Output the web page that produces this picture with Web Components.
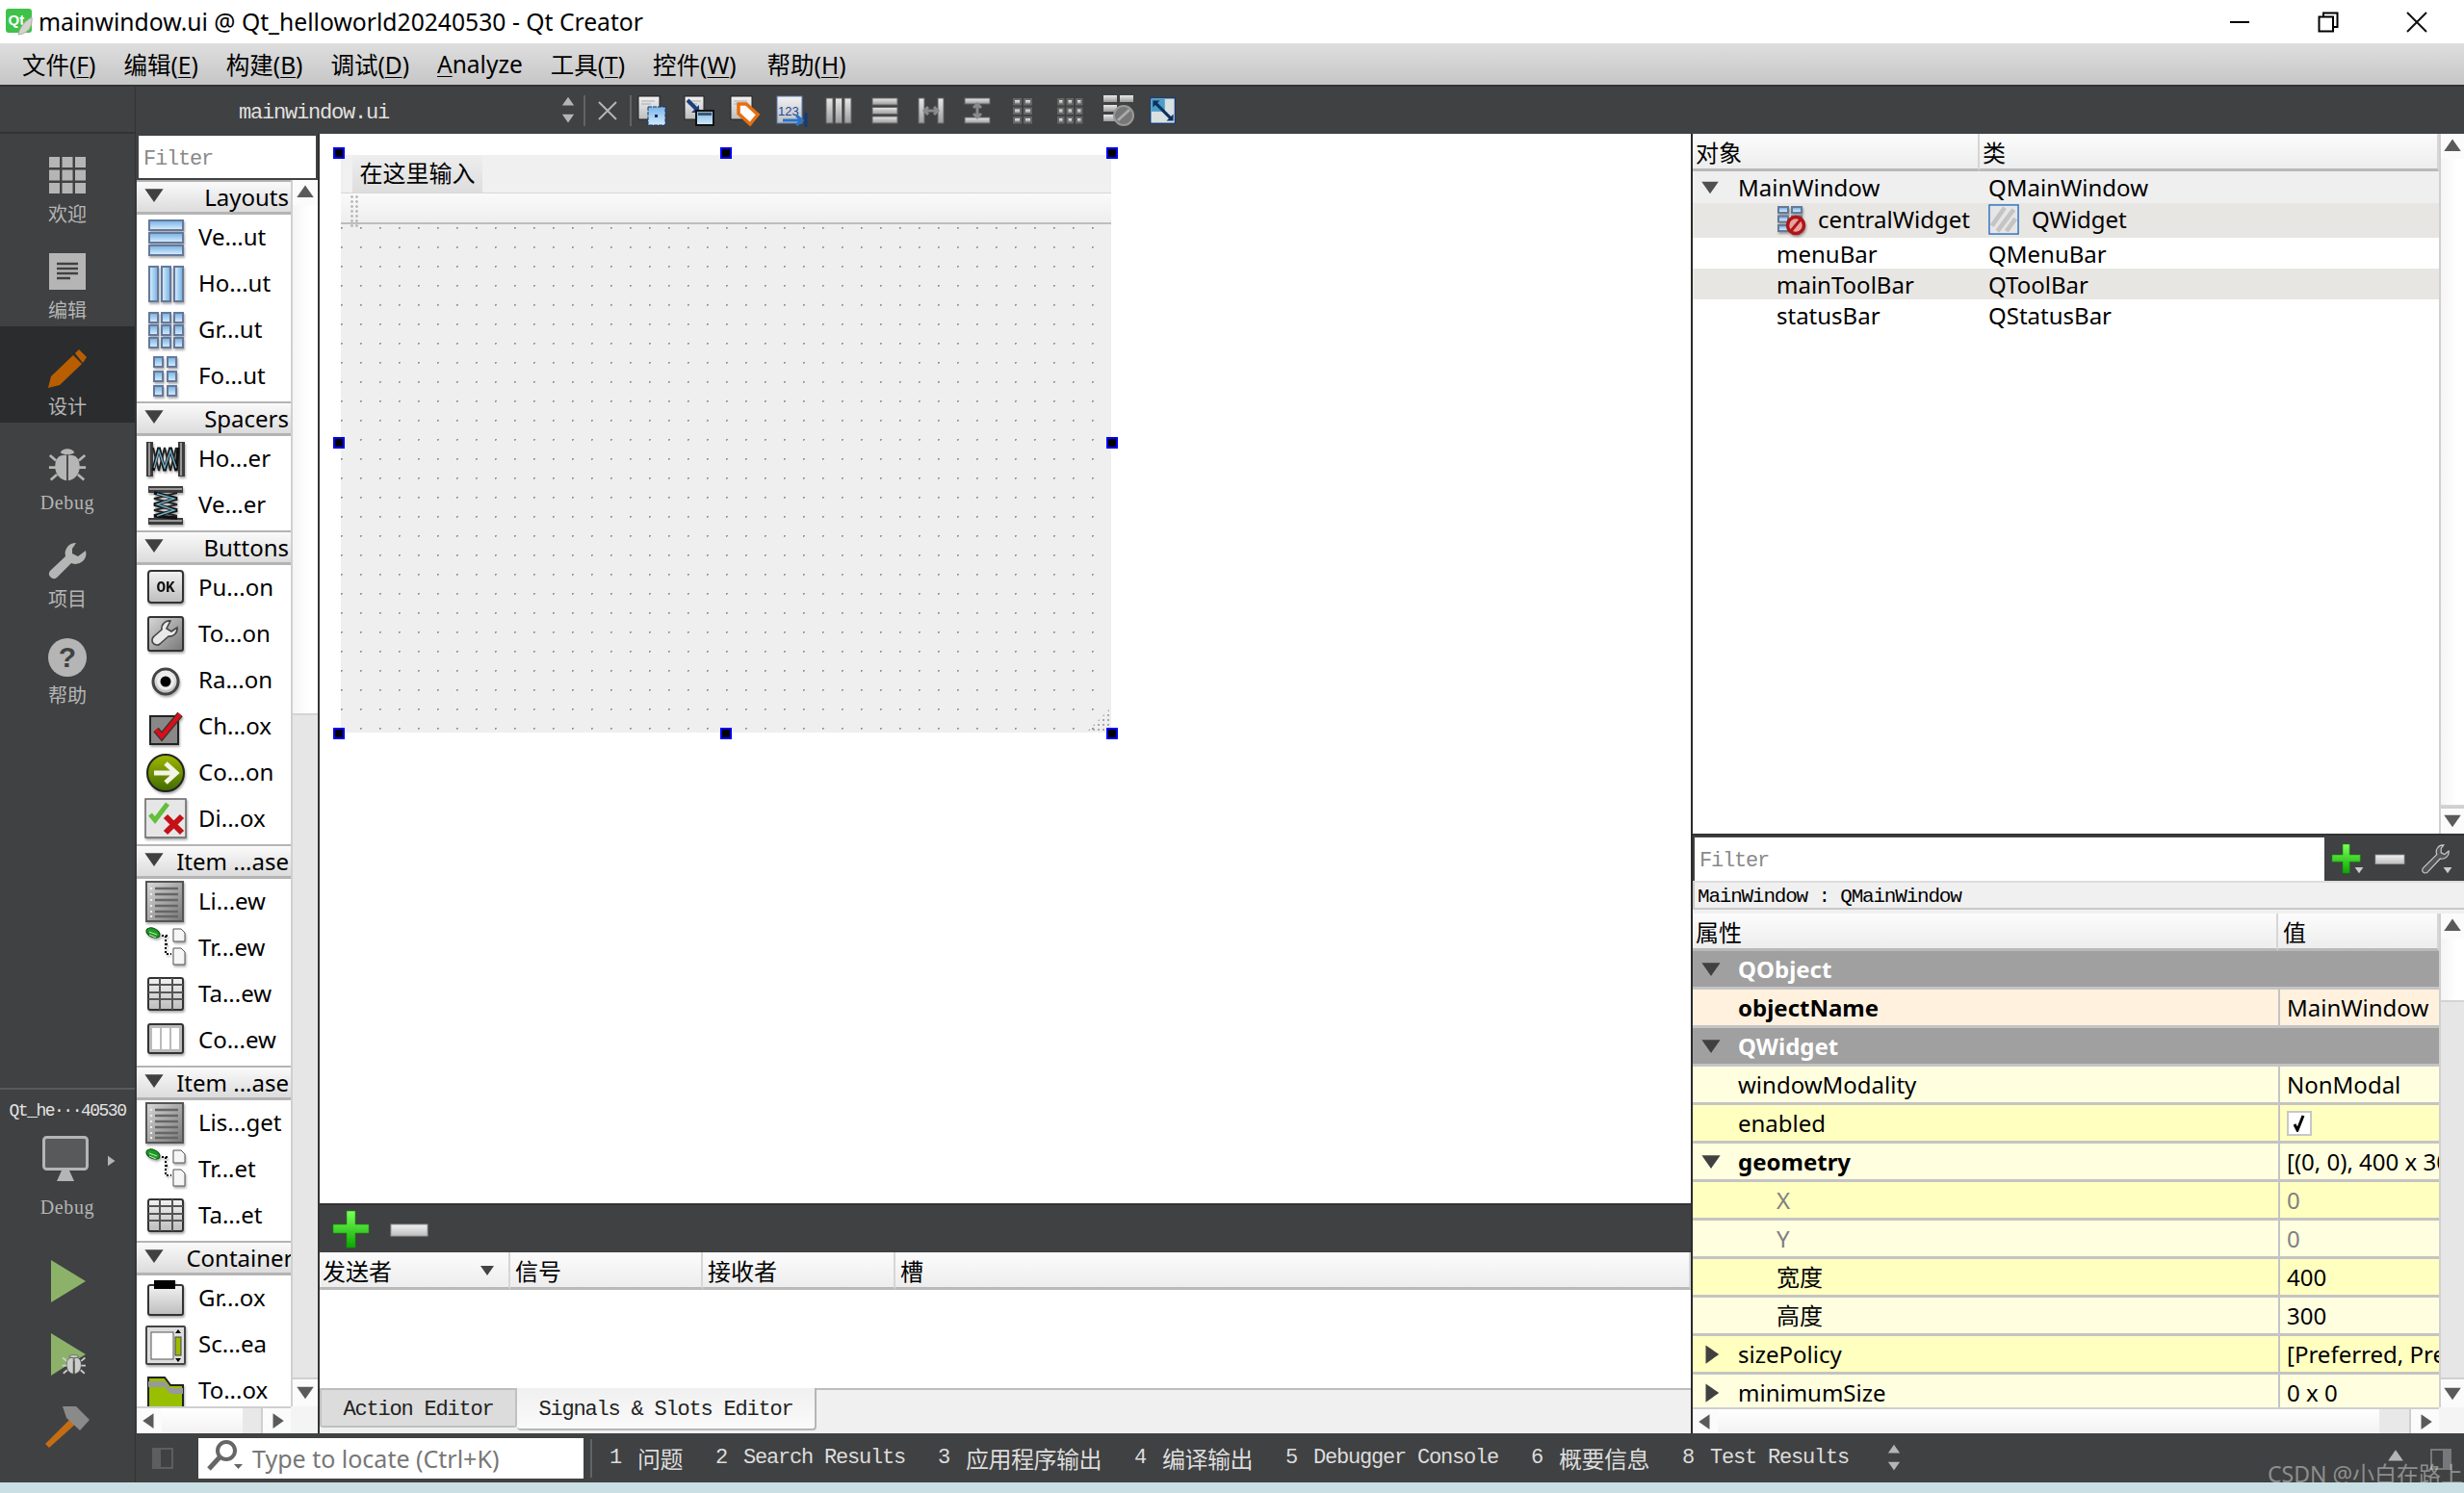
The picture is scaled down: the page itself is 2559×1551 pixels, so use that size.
<!DOCTYPE html>
<html lang="zh"><head><meta charset="utf-8"><title>Qt Creator</title>
<style>html,body{margin:0;padding:0;width:2559px;height:1551px;overflow:hidden;background:#c9dfe4}</style></head>
<body><qt-creator></qt-creator>
<script>
const SANS='"Noto Sans","Noto Sans CJK SC",sans-serif';
const CJK='"Noto Sans CJK SC",sans-serif';
const MONO='font:22px "Liberation Mono","Noto Sans CJK SC",monospace;letter-spacing:-1.2px;';
const DARK='#404142';
function def(tag,css,html){customElements.define(tag,class extends HTMLElement{
  connectedCallback(){ if(this.shadowRoot) return;
    const a=n=>this.getAttribute(n);
    this.attachShadow({mode:'open'}).innerHTML='<style>'+css+'</style>'+(typeof html==='function'?html(a):html);
  }});}
/* ---------- icons ---------- */
const GR=`<defs>
<linearGradient id="b" x1="0" y1="0" x2="0" y2="1"><stop offset="0" stop-color="#7db6e6"/><stop offset="1" stop-color="#d2eafc"/></linearGradient>
<linearGradient id="bh" x1="0" y1="0" x2="1" y2="0"><stop offset="0" stop-color="#d2eafc"/><stop offset="1" stop-color="#7db6e6"/></linearGradient>
<linearGradient id="g" x1="0" y1="0" x2="0" y2="1"><stop offset="0" stop-color="#f2f2f2"/><stop offset="1" stop-color="#bdbdbd"/></linearGradient>
<linearGradient id="gd" x1="0" y1="0" x2="1" y2="1"><stop offset="0" stop-color="#d8d8d8"/><stop offset="1" stop-color="#777"/></linearGradient>
<linearGradient id="gv" x1="0" y1="0" x2="0" y2="1"><stop offset="0" stop-color="#9fb800"/><stop offset="1" stop-color="#3f6a00"/></linearGradient>
<linearGradient id="plus" x1="0" y1="0" x2="0" y2="1"><stop offset="0" stop-color="#7dff5c"/><stop offset="1" stop-color="#0aa800"/></linearGradient>
<linearGradient id="tb" x1="0" y1="0" x2="0" y2="1"><stop offset="0" stop-color="#e8e8e8"/><stop offset="1" stop-color="#9c9c9c"/></linearGradient>
</defs>`;
const cell=(x,y,w,h,f='url(#b)',s='#66789a')=>`<rect x="${x}" y="${y}" width="${w}" height="${h}" fill="${s}"/><rect x="${x+2}" y="${y+2}" width="${w-4}" height="${h-4}" fill="${f}"/>`;
const gridOf=(x0,y0,cols,rows,w,h,px,py,f,s)=>{let o='';for(let r=0;r<rows;r++)for(let c=0;c<cols;c++)o+=cell(x0+c*px,y0+r*py,w,h,f,s);return o;};
const spring=`<rect x="2" y="4" width="7" height="36" fill="#3c3c3c"/><rect x="35" y="4" width="7" height="36" fill="#3c3c3c"/>
<rect x="4" y="5" width="2" height="34" fill="#999"/><rect x="37" y="5" width="2" height="34" fill="#999"/>
<path d="M9 34L15 10 21 34 27 10 33 34 35 10" fill="none" stroke="#111" stroke-width="3.4"/><path d="M9 10L15 34 21 10 27 34 33 10" fill="none" stroke="#222" stroke-width="2"/><path d="M10 31L15 13 21 31 27 13 33 31" fill="none" stroke="#6fb0cc" stroke-width="1.4"/>`;
const gw=(x=2,y=2,w=22,h=24)=>`<rect x="${x}" y="${y}" width="${w}" height="${h}" fill="url(#g)" stroke="#222"/><path d="M${x+3} ${y+5}h14M${x+3} ${y+8}h10" stroke="#aaa"/>`;
const I={
 vlayout:[44,gridOf(4,3,1,3,37,12,0,13)+''],
 hlayout:[44,gridOf(4,3,3,1,11,38,13,0,'url(#bh)')],
 grid:[44,gridOf(4,3,3,3,11,12,13,13)],
 form:[44,gridOf(9,1,2,3,11,12,14,15)],
 hspacer:[44,spring],
 vspacer:[44,`<g transform="rotate(90 22 22)">${spring}</g>`],
 push:[44,`<rect x="4" y="4" width="36" height="33" rx="3" fill="url(#g)" stroke="#333" stroke-width="2"/><text x="22" y="26" font-family="Liberation Mono" font-weight="700" font-size="16" text-anchor="middle" fill="#111">OK</text>`],
 tool:[44,`<rect x="4" y="4" width="36" height="35" rx="2" fill="url(#gd)" stroke="#333" stroke-width="2"/><path d="M27 8a8 8 0 0 0-9 9l-8 7a5 5 0 0 0 6 8l9-8a8 8 0 0 0 9-9l-6 4-5-3z" fill="#e9e9e9" stroke="#444" stroke-width="1.6"/>`],
 radio:[44,`<circle cx="22" cy="23" r="13" fill="url(#g)" stroke="#444" stroke-width="3"/><circle cx="22" cy="23" r="9" fill="#eee"/><circle cx="22" cy="23" r="5.5" fill="#000"/>`],
 check:[44,`<rect x="6" y="11" width="29" height="29" fill="#888" stroke="#222" stroke-width="2"/><path d="M12 25l6 7 19-23" fill="none" stroke="#333" stroke-width="7"/><path d="M12 25l6 7 19-23" fill="none" stroke="#d80f1a" stroke-width="4.5"/>`],
 link:[44,`<circle cx="22" cy="22" r="19" fill="url(#gv)" stroke="#222" stroke-width="2"/><path d="M10 22h22M22 12l11 10-11 10" fill="none" stroke="#f4f4e8" stroke-width="5"/>`],
 dialog:[44,`<rect x="1" y="1" width="42" height="40" fill="#e6e6e6" stroke="#666" stroke-width="1.5"/><path d="M6 17l5 6 13-17" fill="none" stroke="#62bf3a" stroke-width="5"/><path d="M22 19l17 17M39 19L22 36" stroke="#c41016" stroke-width="6"/>`],
 list:[44,`<rect x="2" y="1" width="38" height="41" fill="url(#gd)" stroke="#555" stroke-width="2"/><path d="M11 8h24M11 14h24M11 20h24M11 26h24M11 32h24M11 37h24" stroke="#666" stroke-width="2.5"/><path d="M6 8h2M6 14h2M6 20h2M6 26h2M6 32h2M6 37h2" stroke="#eee" stroke-width="2"/>`],
 tree:[44,`<ellipse cx="9" cy="6" rx="7.5" ry="4.5" transform="rotate(25 9 6)" fill="#1f9a26" stroke="#0a4c10"/><path d="M5 5l8 3M5 8l7 3" stroke="#bff0b8"/><path d="M18 9h8M22 9v19h6M22 18h4" stroke="#000" stroke-dasharray="2 2" stroke-width="2" fill="none"/><path d="M30 2h8l4 4v9H30z" fill="#f6f6f6" stroke="#555"/><path d="M30 22h8l4 4v13H30z" fill="#f6f6f6" stroke="#555"/>`],
 table:[44,`<rect x="4" y="5" width="36" height="33" rx="2" fill="url(#g)" stroke="#333" stroke-width="2"/><path d="M4 12h36M4 20h36M4 27h36M16 5v33M29 5v33" stroke="#555" stroke-width="2"/>`],
 column:[44,`<rect x="4" y="5" width="36" height="30" rx="2" fill="#bbb" stroke="#333" stroke-width="2"/><rect x="8" y="9" width="8" height="22" fill="#fff"/><rect x="18" y="9" width="8" height="22" fill="#fff"/><rect x="28" y="9" width="8" height="22" fill="#fff"/>`],
 group:[44,`<rect x="4" y="8" width="36" height="31" rx="2" fill="url(#g)" stroke="#333" stroke-width="2"/><rect x="10" y="3" width="22" height="9" fill="#000"/>`],
 scroll:[44,`<rect x="2" y="3" width="40" height="39" rx="1" fill="#ddd" stroke="#444" stroke-width="2"/><rect x="7" y="9" width="23" height="28" fill="#fff" stroke="#555"/><rect x="32" y="14" width="6" height="19" fill="#9cba00" stroke="#444"/><path d="M35 6l3 4h-6zM35 40l3-4h-6z" fill="#000"/>`],
 toolbox:[44,`<path d="M4 8h17l6 8h13v32H4z" fill="#98bf00" stroke="#222" stroke-width="2"/><path d="M4 12h17l6 7h13v6H27l-6-7H4z" fill="#999"/>`],
 /* dark mode bar */
 welcome:[38,gridOf(0,0,3,3,11,11,13.5,13.5,'#b5b5b5','#b5b5b5')],
 edit:[38,`<rect width="38" height="38" fill="#b5b5b5"/><path d="M8 11h22M8 16h22M8 21h22M8 26h14" stroke="#404142" stroke-width="2.4"/>`],
 pencil:[40,`<path d="M0 40l3-12L26 6l9 9-23 22z" fill="#b95e00"/><path d="M28 4l4-4 8 8-4 6z" fill="#b95e00"/>`],
 bug:[44,`<g fill="#b5b5b5"><path d="M14 8c2-6 14-6 16 0-5 3-11 3-16 0z"/><path d="M21 11c-8-1-13 3-13 13 0 9 6 15 13 16zM23 11c8-1 13 3 13 13 0 9-6 15-13 16z"/></g><path d="M9 17L2 11M9 25H1M10 33l-7 6M35 17l7-6M35 25h8M34 33l7 6" stroke="#b5b5b5" stroke-width="3" fill="none"/>`],
 wrench:[40,`<path d="M29 1a11 11 0 0 0-11 14L2 30a5 5 0 0 0 7 7l15-15A11 11 0 0 0 39 9l-8 6-6-3 0-5z" fill="#b5b5b5"/>`],
 help:[40,`<circle cx="20" cy="20" r="20" fill="#b5b5b5"/><text x="20" y="30" font-family="Liberation Sans" font-weight="700" font-size="30" text-anchor="middle" fill="#404142">?</text>`],
 monitor:[48,`<rect x="1.5" y="1.5" width="45" height="33" rx="3" fill="#58595a" stroke="#b5b5b5" stroke-width="3"/><path d="M20 36h8l5 11H15z" fill="#b5b5b5"/>`],
 run:[44,`<path d="M4 0l36 22L4 44z" fill="#8cb26a"/>`],
 rundbg:[44,`<path d="M4 0l36 22-14 8-22 14z" fill="#8cb26a"/><g transform="translate(15 22) scale(.58)" fill="#ccc" stroke="#404142" stroke-width="1"><path d="M21 6c-8-1-12 3-12 13 0 9 5 15 12 16zM23 6c8-1 12 3 12 13 0 9-5 15-12 16z"/><path d="M13 4c2-4 16-4 18 0-5 3-13 3-18 0z"/><path d="M9 12L2 6M9 20H1M10 28l-7 6M35 12l7-6M35 20h8M34 28l7 6" stroke="#ccc" stroke-width="3" fill="none"/></g>`],
 hammer:[46,`<path d="M0 39l27-27 6 5L4 43z" fill="#c46d13"/><path d="M18 0h14l14 14-10 11-14-13z" fill="#8a8a8a"/>`],
 /* doc toolbar */
 widget:[34,gw()+`<rect x="12" y="13" width="18" height="19" fill="url(#b)" stroke="#123a78" stroke-dasharray="4 1"/><rect x="19" y="21" width="3" height="3" fill="#0a2a70"/>`],
 signal:[34,gw(2,2,20,24)+`<path d="M5 6l11 11" stroke="#1c3f7e" stroke-width="4"/><path d="M17 11v8H9z" fill="#1c3f7e"/><rect x="14" y="17" width="18" height="15" fill="url(#b)" stroke="#111" stroke-width="2"/><rect x="16" y="19" width="14" height="3" fill="#456"/>`],
 buddy:[34,gw(2,2,22,24)+`<path d="M10 10h8l12 11-8 10L10 20z" fill="#fff" stroke="#e66f10" stroke-width="3.5"/>`],
 taborder:[34,`<rect x="2" y="2" width="26" height="28" fill="url(#g)" stroke="#567cb6"/><text x="3" y="22" font-family="Liberation Sans" font-size="13" fill="#1c46a0">123</text><path d="M8 27h18M22 22l6 5-6 5" stroke="#2a74c8" stroke-width="3" fill="none"/><path d="M32 19v15" stroke="#123a78" stroke-width="3"/>`],
 tbh:[28,`<rect x="1" y="1" width="7" height="26" fill="url(#tb)" stroke="#666"/><rect x="10.5" y="1" width="7" height="26" fill="url(#tb)" stroke="#666"/><rect x="20" y="1" width="7" height="26" fill="url(#tb)" stroke="#666"/>`],
 tbv:[28,`<rect x="1" y="1" width="26" height="7" fill="url(#tb)" stroke="#666"/><rect x="1" y="10.5" width="26" height="7" fill="url(#tb)" stroke="#666"/><rect x="1" y="20" width="26" height="7" fill="url(#tb)" stroke="#666"/>`],
 tbsh:[28,`<rect x="1" y="1" width="6" height="26" fill="url(#tb)" stroke="#666"/><rect x="21" y="1" width="6" height="26" fill="url(#tb)" stroke="#666"/><path d="M8 14h12M11 10l-4 4 4 4M17 10l4 4-4 4" stroke="#8a8a8a" stroke-width="3" fill="none"/>`],
 tbsv:[28,`<rect x="1" y="1" width="26" height="6" fill="url(#tb)" stroke="#666"/><rect x="1" y="21" width="26" height="6" fill="url(#tb)" stroke="#666"/><path d="M14 8v12M10 11l4-4 4 4M10 17l4 4 4-4" stroke="#8a8a8a" stroke-width="3" fill="none"/>`],
 tbf:[28,gridOf(3,1,2,3,9,7.5,11,9.5,'url(#tb)','#666')],
 tbg:[28,gridOf(1,1,3,3,7.5,7.5,9.5,9.5,'url(#tb)','#666')],
 tbbrk:[34,`<rect x="1" y="1" width="14" height="7" fill="url(#tb)"/><rect x="18" y="1" width="14" height="7" fill="url(#tb)"/><rect x="1" y="11" width="14" height="7" fill="url(#tb)"/><rect x="1" y="21" width="14" height="7" fill="url(#tb)"/><circle cx="22" cy="22" r="10" fill="#777" stroke="#999" stroke-width="2"/><path d="M16 27l12-11" stroke="#aaa" stroke-width="3"/>`],
 tbadj:[34,`<rect x="2" y="2" width="29" height="30" fill="#d8e0e2" stroke="#123a78" stroke-width="1.5"/><rect x="3" y="3" width="16" height="15" fill="#4b9ec6"/><path d="M7 7l20 20" stroke="#0b3060" stroke-width="3.5"/><path d="M5 5h8l-8 8zM29 29h-8l8-8z" fill="#0b3060"/>`],
 plus:[38,`<path d="M14 0h9v14h14v9H23v15h-9V23H0v-9h14z" fill="url(#plus)" stroke="#0a9a00" stroke-width=".6"/>`],
 minus:[38,`<rect x="0" y="14" width="38" height="12" fill="url(#g)" stroke="#999"/>`],
 wrenchsm:[34,`<path d="M27 1a8 8 0 0 0-8 11L3 28a3 3 0 0 0 5 5l15-16a8 8 0 0 0 10-9l-5 4-4-2v-5z" fill="#555" stroke="#ccc" stroke-width="1.3"/>`],
 layoutoff:[30,gridOf(1,1,2,3,12,8,14,9.5)+`<circle cx="20" cy="21" r="8.5" fill="#e8a0a0" stroke="#b01515" stroke-width="3.5"/><path d="M15 27l10-12" stroke="#b01515" stroke-width="3"/>`],
 widgetcls:[34,`<rect x="1" y="1" width="32" height="32" fill="#e6e6e6" stroke="#2a6fc0" stroke-width="1.5"/><path d="M4 24L18 4M10 30L28 6M20 30L30 16" stroke="#c4c4c4" stroke-width="5"/>`],
 search:[44,`<circle cx="24" cy="14" r="9" fill="none" stroke="#666" stroke-width="4"/><path d="M17 21L6 33" stroke="#666" stroke-width="5"/><path d="M32 28h9l-4.500 5z" fill="#666"/>`],
 toggleL:[22,`<rect width="22" height="22" fill="#5d5e60"/><rect x="9" y="2" width="11" height="18" fill="#404142"/>`],
 toggleR:[22,`<rect width="22" height="22" fill="#77787a"/><rect x="2" y="2" width="11" height="18" fill="#404142"/>`],
 qt:[30,`<rect x="1" y="1" width="27" height="25" rx="3" fill="#3fc24a"/><text x="3.500" y="18" font-family="Liberation Sans" font-weight="700" font-size="15" fill="#fff">Qt</text><path d="M28 10c1 10-4 17-14 18 1-6 6-14 14-18z" fill="#d4d4cc" stroke="#aaa"/>`]
};
def('qt-icon',`:host{display:inline-flex;flex:none;line-height:0}svg{display:block;overflow:visible}:host([shadow]) svg{filter:drop-shadow(1px 2px 1px rgba(0,0,0,.32))}`,
 a=>{const k=I[a('name')],s=a('size')||k[0],h=a('h')||s;return `<svg xmlns="http://www.w3.org/2000/svg" width="${s}" height="${h}" viewBox="0 0 ${k[0]} ${k[0]}" preserveAspectRatio="none">${GR}${k[1]}</svg>`});
def('qt-arrow',`:host{display:inline-flex;flex:none;line-height:0}`,a=>{
  const d={up:'M1 12L8 2l7 10z',down:'M1 3h14L8 13z',left:'M12 1v14L2 8z',right:'M4 1v14L14 8z'}[a('dir')],s=a('size')||16,c=a('color')||'#555';
  return `<svg width="${s}" height="${s}" viewBox="0 0 16 16"><path d="${d}" fill="${c}"/></svg>`});
def('qt-updown',`:host{display:inline-flex;flex-direction:column;gap:3px;flex:none;align-items:center}`,a=>{
  const c=a('color')||'#b5b5b5';return `<qt-arrow dir="up" size="14" color="${c}"></qt-arrow><qt-arrow dir="down" size="14" color="${c}"></qt-arrow>`});
/* ---------- scrollbars ---------- */
def('qt-scrollbar',`:host{display:flex;flex:none;background:#e6e6e6;box-sizing:border-box}
:host([orient=v]){flex-direction:column;border-left:2px solid #d0d0d0;height:100%}
:host([orient=h]){flex-direction:row;border-top:2px solid #cfcfcf;width:100%}
.btn{flex:none;display:flex;align-items:center;justify-content:center;background:#fbfbfb}
:host([orient=v]) .btn:first-child{border-bottom:2px solid #cfcfcf}:host([orient=v]) .btn:last-child{border-top:2px solid #cfcfcf}
:host([orient=h]) .btn:first-child{border-right:2px solid #cfcfcf}:host([orient=h]) .btn:last-child{border-left:2px solid #cfcfcf}
.thumb{flex:none}:host([orient=v]) .thumb{background:linear-gradient(90deg,#f5f5f5,#fff 70%);border-bottom:2px solid #d4d4d4}
:host([orient=h]) .thumb{background:linear-gradient(#fff,#f2f2f2)}.tr{flex:1}`,
a=>{const v=a('orient')=='v',s=a('thumb'),b=a('btn')||26,e=a('end')||b,sz=v?'height':'width';
 const th=s=='fill'?'flex:1':`${sz}:${s}px`;
 return `<div class="btn" style="${sz}:${b}px"><qt-arrow dir="${v?'up':'left'}" color="#5a5a5a" size="${v?20:18}"></qt-arrow></div><div class="thumb" style="${th}"></div>${s=='fill'?'':'<div class="tr"></div>'}<div class="btn" style="${sz}:${e}px"><qt-arrow dir="${v?'down':'right'}" color="#5a5a5a" size="${v?20:18}"></qt-arrow></div>`});
/* ---------- title + menu ---------- */
def('win-title',`:host{display:flex;align-items:center;height:45px;background:#fff;font:24.7px ${SANS};color:#000;padding-left:5px;box-sizing:border-box;white-space:nowrap}
.t{margin-left:5px;flex:1}.c{width:92px;height:45px;display:flex;align-items:center;justify-content:center}.c:last-child{margin-right:3px}`,
`<qt-icon name="qt" size="30"></qt-icon><span class="t"><slot></slot></span>
<div class="c"><svg width="22" height="22"><path d="M1 11h20" stroke="#000" stroke-width="2"/></svg></div>
<div class="c"><svg width="22" height="22"><path d="M6 5V1.500h14.500V16H16" fill="none" stroke="#000" stroke-width="2"/><rect x="1.500" y="5.500" width="14.500" height="15" fill="none" stroke="#000" stroke-width="2"/></svg></div>
<div class="c"><svg width="22" height="22"><path d="M1 1l20 20M21 1L1 21" stroke="#111" stroke-width="2"/></svg></div>`);
def('menu-strip',`:host{display:flex;align-items:center;height:45px;box-sizing:border-box;padding-left:23px;gap:29px;background:linear-gradient(#dedede,#c6c6c6);border-bottom:2px solid #333;font:24.5px ${SANS};color:#000;white-space:nowrap}`,`<slot></slot>`);
def('menu-item',`:host{display:inline-block}:host(:last-child){margin-left:3px}u{text-underline-offset:3px;text-decoration-thickness:1px}`,a=>{
  const l=a('label'),k=a('key');return k?`${l}(<u>${k}</u>)`:`<u>${l[0]}</u>${l.slice(1)}`});
/* ---------- mode bar ---------- */
def('mode-bar',`:host{display:flex;flex-direction:column;width:141px;flex:none;background:${DARK};box-sizing:border-box;height:100%;color:#b5b5b5;border-right:1px solid #333}
.top{height:49px;border-bottom:2px solid #333;box-sizing:border-box;flex:none}
.kit{margin-top:auto;border-top:2px solid #58595a;height:410px;box-sizing:border-box;display:flex;flex-direction:column;align-items:center;position:relative}
.nm{font:18px "Liberation Mono",monospace;letter-spacing:-1.5px;color:#e4e4e4;margin-top:10px;line-height:24px;white-space:nowrap}
.mon{display:flex;align-items:center;margin-top:14px;margin-left:24px}.mon qt-arrow{margin:4px 0 0 17px}
.lb{font:400 20px "Liberation Serif",serif;margin-top:14px;line-height:24px;letter-spacing:.6px}
.r{margin-top:43px;height:44px;margin-left:2px}.r2{margin-top:32px;height:44px;margin-left:2px}.r3{margin-top:32px;margin-left:0}`,
`<div class="top"></div><slot></slot><div class="kit"><div class="nm">Qt_he···40530</div>
<div class="mon"><qt-icon name="monitor"></qt-icon><qt-arrow dir="right" size="12" color="#b5b5b5"></qt-arrow></div><div class="lb">Debug</div>
<qt-icon class="r" name="run"></qt-icon><qt-icon class="r2" name="rundbg"></qt-icon><qt-icon class="r3" name="hammer" size="46"></qt-icon></div>`);
def('mode-item',`:host{display:flex;flex-direction:column;align-items:center;height:100px;box-sizing:border-box;padding-top:24px;flex:none;position:relative}
:host([active]){background:#2b2c2e}
.i{height:42px;display:flex;align-items:flex-start}
.l{position:absolute;top:71px;left:0;right:0;text-align:center;font:20px/24px ${CJK};color:#b5b5b5}
:host([serif]) .l{font:400 20px/24px "Liberation Serif",serif;letter-spacing:.6px}`,
a=>`<div class="i"><qt-icon name="${a('icon')}"${a('size')?` size="${a('size')}"`:''}></qt-icon></div><div class="l"><slot></slot></div>`);
/* ---------- doc toolbar ---------- */
def('doc-toolbar',`:host{display:flex;align-items:center;height:49px;flex:none;background:${DARK};color:#e0e0e0;border-top:0;box-sizing:border-box;position:relative}
.n{${MONO}margin-left:107px;width:335px;flex:none;padding-top:5px}
.sep{width:2px;height:32px;background:#626364;flex:none}
.x{margin:0 13px;flex:none;display:flex}
.ic{display:flex;align-items:center;height:49px}
.ud{margin-right:9px}`,
`<span class="n">mainwindow.ui</span><qt-updown class="ud"></qt-updown><div class="sep"></div>
<div class="x"><svg width="20" height="20"><path d="M1 1l18 18M19 1L1 19" stroke="#b5b5b5" stroke-width="2"/></svg></div><div class="sep"></div>
<div class="ic" style="margin-left:5px;gap:14px"><qt-icon name="widget"></qt-icon><qt-icon name="signal"></qt-icon><qt-icon name="buddy"></qt-icon><qt-icon name="taborder"></qt-icon></div>
<div class="ic" style="margin-left:18px;gap:20px"><qt-icon name="tbh" h="28"></qt-icon><qt-icon name="tbv"></qt-icon><qt-icon name="tbsh"></qt-icon><qt-icon name="tbsv"></qt-icon><qt-icon name="tbf"></qt-icon><qt-icon name="tbg"></qt-icon><qt-icon name="tbbrk"></qt-icon><qt-icon name="tbadj" size="30" style="margin-left:-6px"></qt-icon></div>`);
/* ---------- widget box ---------- */
def('qt-filter',`:host{display:flex;align-items:center;background:#fff;box-sizing:border-box;padding:4px 0 0 5px;${MONO}color:#8a8a8a;height:44px}`,`<slot></slot>`);
def('widget-box',`:host{display:grid;grid-template-columns:160px 28px;grid-template-rows:48px 1fr 28px;width:191px;flex:none;background:${DARK};box-sizing:border-box;padding-left:1px;border-right:2px solid #333;height:100%;overflow:hidden}
.f{grid-column:1/3;padding:2px 2px 2px 2px}
.l{background:#fff;overflow:hidden;min-height:0;font:24px ${SANS};color:#000}
.c{background:#f4f4f4;grid-column:2}`,
`<div class="f"><qt-filter>Filter</qt-filter></div><div class="l"><slot></slot></div>
<qt-scrollbar orient="v" thumb="528" btn="26" end="28"></qt-scrollbar><qt-scrollbar orient="h" thumb="84" btn="26" end="29" style="background:#e8e8e8"></qt-scrollbar><div class="c"></div>`);
def('wb-cat',`:host{display:flex;height:36px;margin-top:2px;box-sizing:border-box;align-items:center;background:linear-gradient(#fafafa,#dcdcdc);border-top:2px solid #b4b4b4;border-bottom:3px solid #b4b4b4;overflow:hidden;position:relative;white-space:nowrap}
:host(:first-child){margin-top:0}
qt-arrow{margin-left:7px;flex:none;margin-top:-4px}
.t{margin-left:auto;margin-right:2px;flex:none}
:host([clip]) .t{margin-right:-14px}`,
`<qt-arrow dir="down" size="22" color="#404040"></qt-arrow><span class="t"><slot></slot></span>`);
def('wb-item',`:host{display:flex;align-items:center;height:48px;box-sizing:border-box;padding-left:8px;white-space:nowrap}
qt-icon{margin-right:12px}span{margin-top:-4px}`,a=>`<qt-icon name="${a('icon')}" shadow></qt-icon><span><slot></slot></span>`);
/* ---------- form ---------- */
def('form-area',`:host{display:block;flex:1;background:#fff;min-height:0;padding:22px 0 0 22px;box-sizing:border-box;overflow:hidden}`,`<slot></slot>`);
def('form-canvas',`:host{display:flex;flex-direction:column;width:800px;height:600px;background:#efefef;position:relative;font:24px ${SANS};color:#000}
.m{height:40px;flex:none;background:#f0f0f0;border-bottom:1px solid #d8d8d8;box-sizing:border-box;padding-left:12px}
.chip{display:inline-flex;align-items:center;height:39px;width:135px;padding-bottom:4px;box-sizing:border-box;justify-content:center;background:linear-gradient(#eee,#ddd);font-family:${CJK}}
.t{height:32px;flex:none;background:linear-gradient(#fafafa,#eee);border-bottom:2px solid #bdbdbd;box-sizing:border-box;position:relative}
.grip{position:absolute;left:10px;top:2px;width:9px;height:34px;background-image:radial-gradient(circle at 1.500px 1.500px,#bbb 1.300px,transparent 1.500px);background-size:5px 5px}
.d{flex:1;background-color:#efefef;background-image:radial-gradient(circle at .8px .8px,#999 .8px,transparent 1.100px);background-size:20px 20px;background-position:0 3px}
.h{position:absolute;width:8px;height:8px;background:#000;border:2px solid #00f}
.rz{position:absolute;right:2px;bottom:2px;width:22px;height:22px;background-image:radial-gradient(circle at 1px 1px,#aaa 1px,transparent 1.300px);background-size:5px 5px;clip-path:polygon(100% 0,100% 100%,0 100%)}`,
`<div class="m"><span class="chip">在这里输入</span></div><div class="t"><div class="grip"></div></div><div class="d"></div><div class="rz"></div>
<div class="h" style="left:-8px;top:-8px"></div><div class="h" style="left:394px;top:-8px"></div><div class="h" style="left:795px;top:-8px"></div>
<div class="h" style="left:-8px;top:293px"></div><div class="h" style="left:795px;top:293px"></div>
<div class="h" style="left:-8px;top:595px"></div><div class="h" style="left:394px;top:595px"></div><div class="h" style="left:795px;top:595px"></div>`);
/* ---------- signals panel ---------- */
def('qt-head',`:host{display:flex;align-items:center;height:100%;box-sizing:border-box;padding-left:3px;background:linear-gradient(#fcfcfc,#ededed);border-bottom:3px solid #b9b9b9;border-right:2px solid #d6d6d6;font:24px ${CJK};color:#000;white-space:nowrap;position:relative}
:host([wide]){padding-left:5px}`,`<slot></slot>`);
def('signal-panel',`:host{display:flex;flex-direction:column;height:239px;flex:none;background:#fff}
.bar{height:51px;background:${DARK};border-top:2px solid #333;box-sizing:border-box;display:flex;align-items:center;padding-left:14px;gap:22px;flex:none}
.hd{display:grid;grid-template-columns:198px 200px 200px 1fr;height:39px;flex:none}
.b{flex:1}
.tabs{height:47px;flex:none;display:flex;background:#f0f0f0;border-top:2px solid #bdbdbd;align-items:flex-start;${MONO}color:#222;box-sizing:border-box}
.tab{display:flex;align-items:center;justify-content:center;box-sizing:border-box;padding-top:3px}
.a{width:205px;height:39px;background:#dcdcdc;border:2px solid #c0c0c0;border-top:0;border-radius:0 0 3px 3px}
.s{width:311px;height:44px;margin-top:-2px;background:linear-gradient(#f0f0f0,#fafafa);border:2px solid #b5b5b5;border-top:0;border-left:0;border-radius:0 0 4px 4px}`,
`<div class="bar"><qt-icon name="plus"></qt-icon><qt-icon name="minus"></qt-icon></div>
<div class="hd"><qt-head>发送者<qt-arrow style="position:absolute;right:14px;top:11px" dir="down" size="16" color="#444"></qt-arrow></qt-head><qt-head wide>信号</qt-head><qt-head wide>接收者</qt-head><qt-head wide>槽</qt-head></div>
<div class="b"></div><div class="tabs"><div class="tab a">Action Editor</div><div class="tab s">Signals &amp; Slots Editor</div></div>`);
/* ---------- object inspector ---------- */
def('obj-inspector',`:host{display:flex;height:727px;flex:none;background:#fff;box-sizing:border-box;font:24px ${SANS};color:#000;overflow:hidden}
.m{flex:1;display:flex;flex-direction:column;min-width:0}
.hd{display:grid;grid-template-columns:298px 1fr;height:39px;flex:none}`,
`<div class="m"><div class="hd"><qt-head>对象</qt-head><qt-head>类</qt-head></div><slot></slot></div><qt-scrollbar orient="v" thumb="fill" btn="26" end="26" style="width:26px;background:#fff"></qt-scrollbar>`);
def('obj-row',`:host{display:grid;grid-template-columns:298px 1fr;align-items:center;height:var(--h,32px);white-space:nowrap;box-sizing:border-box;padding-bottom:var(--pb,6px)}
.a{display:flex;align-items:center;min-width:0}.b{display:flex;align-items:center;padding-left:9px}
qt-arrow{margin-left:8px}`,
a=>`<div class="a" style="padding-left:${a('indent')}px">${a('open')!=null?'<qt-arrow dir="down" size="20" color="#505050"></qt-arrow><span style="width:19px"></span>':''}<slot name="n"></slot></div><div class="b"><slot></slot></div>`);
/* ---------- property editor ---------- */
def('prop-editor',`:host{display:flex;flex-direction:column;height:623px;flex:none;box-sizing:border-box;font:24px ${SANS};color:#000;overflow:hidden;background:#f0f0f0}
.f{display:flex;height:49px;flex:none;background:${DARK};border-top:2px solid #333;box-sizing:border-box;align-items:center}
qt-filter{width:654px;flex:none;margin:2px 0 0 2px;height:45px}
.ti{position:relative;display:flex;margin-left:0}.ti qt-arrow{position:absolute;right:-3px;bottom:-2px}
.cl{height:30px;flex:none;background:#f0f0f0;border:2px solid #c8c8c8;border-right:0;border-top:2px solid #ddd;box-sizing:border-box;${MONO}color:#000;display:flex;align-items:center;padding:2px 0 0 3px;font-size:21px}
.g{flex:1;display:grid;grid-template-columns:1fr 26px;grid-template-rows:1fr 27px;min-height:0;margin-top:4px}
.m{display:flex;flex-direction:column;min-height:0;overflow:hidden}
.hd{display:grid;grid-template-columns:608px 1fr;height:39px;flex:none}
.c{background:#f4f4f4}`,
`<div class="f"><qt-filter>Filter</qt-filter><div class="ti" style="margin-left:8px"><qt-icon name="plus" size="30"></qt-icon><qt-arrow dir="down" size="10" color="#ccc"></qt-arrow></div><div class="ti" style="margin-left:15px"><qt-icon name="minus" size="30"></qt-icon></div><div class="ti" style="margin-left:17px"><qt-icon name="wrenchsm" size="30"></qt-icon><qt-arrow dir="down" size="10" color="#ccc"></qt-arrow></div></div>
<div class="cl">MainWindow : QMainWindow</div>
<div class="g"><div class="m"><div class="hd"><qt-head>属性</qt-head><qt-head style="padding-left:5px">值</qt-head></div><slot></slot></div>
<qt-scrollbar orient="v" thumb="64" btn="26" end="29" style="width:26px"></qt-scrollbar>
<qt-scrollbar orient="h" thumb="687" btn="26" end="29" style="background:#e8e8e8"></qt-scrollbar><div class="c"></div></div>`);
def('prop-row',`:host{display:grid;grid-template-columns:608px 1fr;height:40px;flex:none;box-sizing:border-box;background:#ffffe0;border-bottom:3px solid #c4c4c4;white-space:nowrap;line-height:37px}
:host([tone=s]){background:#ffffc0}:host([tone=o]){background:#fff1de}
:host([tone=g]){background:#a0a0a0;color:#fff;font-weight:700;display:flex}
:host([dim]){color:#808080}
.n{display:flex;align-items:center;min-width:0;position:relative}
.v{border-left:2px solid #c4c4c4;padding-left:7px;overflow:hidden;display:flex;align-items:center}
qt-arrow{position:absolute;left:8px}`,
a=>{const d=a('arrow'),g=a('tone')=='g';return `<div class="n" style="padding-left:${a('indent')||47}px">${d?`<qt-arrow dir="${d}" size="22" color="#404040"></qt-arrow>`:''}<slot></slot></div>${g?'':'<div class="v"><slot name="v"></slot></div>'}`});
def('qt-check',`:host{display:inline-flex;width:26px;height:26px;box-sizing:border-box;background:#fff;border:2px solid #c8c8c8;align-items:center;justify-content:center}`,
`<svg width="14" height="18"><path d="M2 10l3 6 6-15" fill="none" stroke="#000" stroke-width="3"/></svg>`);
/* ---------- status ---------- */
def('status-strip',`:host{display:flex;align-items:center;height:51px;flex:none;background:${DARK};position:relative;overflow:hidden;white-space:nowrap;color:#dcdcdc}
.tg{margin:0 26px 0 17px}
.s{display:flex;align-items:center;height:42px;width:400px;background:#fff;box-sizing:border-box;padding-left:5px;font:25px ${SANS};color:#777;flex:none}
.sep{width:2px;height:40px;background:#626364;margin:0 18px 0 7px;flex:none}
.its{display:flex;gap:34px;align-items:center}
.r{position:absolute;left:2338px;top:15px}.rt{position:absolute;left:2383px;top:16px}
.wm{position:absolute;left:2214px;top:28px;font:23px/28px ${SANS};color:rgba(255,255,255,.42)}
qt-updown{margin-left:40px}`,
`<qt-icon class="tg" name="toggleL"></qt-icon><div class="s"><qt-icon name="search" style="margin-right:7px"></qt-icon><span>Type to locate (Ctrl+K)</span></div><div class="sep"></div>
<div class="its"><slot></slot></div><qt-updown></qt-updown>
<qt-arrow class="r" dir="up" size="18" color="#b5b5b5"></qt-arrow><qt-icon class="rt" name="toggleR"></qt-icon><div class="wm">CSDN @小白在路上~</div>`);
def('status-item',`:host{display:inline-flex;align-items:center;gap:17px;${MONO}}
.n{width:12px;text-align:center}::slotted(i){font:24px ${CJK};letter-spacing:-.5px}`,
a=>`<span class="n">${a('n')}</span><span><slot></slot></span>`);
/* ---------- root ---------- */
def('qt-creator',`:host{display:flex;flex-direction:column;width:2559px;height:1551px;background:#c9dfe4;overflow:hidden;font-family:${SANS}}
.main{display:flex;height:1450px;flex:none}
.col{display:flex;flex-direction:column;flex:1;min-width:0}
.ws{display:flex;height:1350px;flex:none}
.center{display:flex;flex-direction:column;flex:1;min-width:0}
.right{width:803px;flex:none;display:flex;flex-direction:column;border-left:2px solid #2a2a2a;box-sizing:border-box}
.row1{--h:33px;background:#efefef}.row2{--h:36px;--pb:3px;background:#e8e6e2}.row3{background:#fff}.row4{background:#e8e6e2}
.sl{display:inline-flex;align-items:center;gap:13px}
.sl2{display:inline-flex;align-items:center;gap:13px}
`,
`<win-title>mainwindow.ui @ Qt_helloworld20240530 - Qt Creator</win-title>
<menu-strip><menu-item label="文件" key="F"></menu-item><menu-item label="编辑" key="E"></menu-item><menu-item label="构建" key="B"></menu-item><menu-item label="调试" key="D"></menu-item><menu-item label="Analyze"></menu-item><menu-item label="工具" key="T"></menu-item><menu-item label="控件" key="W"></menu-item><menu-item label="帮助" key="H"></menu-item></menu-strip>
<div class="main">
<mode-bar><mode-item icon="welcome">欢迎</mode-item><mode-item icon="edit">编辑</mode-item><mode-item icon="pencil" active>设计</mode-item><mode-item icon="bug" size="40" serif>Debug</mode-item><mode-item icon="wrench">项目</mode-item><mode-item icon="help">帮助</mode-item></mode-bar>
<div class="col"><doc-toolbar></doc-toolbar>
<div class="ws">
<widget-box>
<wb-cat>Layouts</wb-cat><wb-item icon="vlayout">Ve...ut</wb-item><wb-item icon="hlayout">Ho...ut</wb-item><wb-item icon="grid">Gr...ut</wb-item><wb-item icon="form">Fo...ut</wb-item>
<wb-cat>Spacers</wb-cat><wb-item icon="hspacer">Ho...er</wb-item><wb-item icon="vspacer">Ve...er</wb-item>
<wb-cat>Buttons</wb-cat><wb-item icon="push">Pu...on</wb-item><wb-item icon="tool">To...on</wb-item><wb-item icon="radio">Ra...on</wb-item><wb-item icon="check">Ch...ox</wb-item><wb-item icon="link">Co...on</wb-item><wb-item icon="dialog">Di...ox</wb-item>
<wb-cat>Item ...ase</wb-cat><wb-item icon="list">Li...ew</wb-item><wb-item icon="tree">Tr...ew</wb-item><wb-item icon="table">Ta...ew</wb-item><wb-item icon="column">Co...ew</wb-item>
<wb-cat>Item ...ase</wb-cat><wb-item icon="list">Lis...get</wb-item><wb-item icon="tree">Tr...et</wb-item><wb-item icon="table">Ta...et</wb-item>
<wb-cat clip>Containers</wb-cat><wb-item icon="group">Gr...ox</wb-item><wb-item icon="scroll">Sc...ea</wb-item><wb-item icon="toolbox">To...ox</wb-item>
</widget-box>
<div class="center"><form-area><form-canvas></form-canvas></form-area><signal-panel></signal-panel></div>
<div class="right">
<obj-inspector>
<obj-row class="row1" indent="0" open><span slot="n">MainWindow</span>QMainWindow</obj-row>
<obj-row class="row2" indent="87"><span slot="n" class="sl"><qt-icon name="layoutoff" size="30" shadow></qt-icon>centralWidget</span><span class="sl2"><qt-icon name="widgetcls" size="32"></qt-icon>QWidget</span></obj-row>
<obj-row class="row3" indent="87"><span slot="n">menuBar</span>QMenuBar</obj-row>
<obj-row class="row4" indent="87"><span slot="n">mainToolBar</span>QToolBar</obj-row>
<obj-row class="row3" indent="87"><span slot="n">statusBar</span>QStatusBar</obj-row>
</obj-inspector>
<prop-editor>
<prop-row tone="g" arrow="down">QObject</prop-row>
<prop-row tone="o"><b>objectName</b><span slot="v">MainWindow</span></prop-row>
<prop-row tone="g" arrow="down">QWidget</prop-row>
<prop-row>windowModality<span slot="v">NonModal</span></prop-row>
<prop-row tone="s">enabled<qt-check slot="v"></qt-check></prop-row>
<prop-row arrow="down"><b>geometry</b><span slot="v">[(0, 0), 400 x 300]</span></prop-row>
<prop-row tone="s" indent="87" dim>X<span slot="v">0</span></prop-row>
<prop-row indent="87" dim>Y<span slot="v">0</span></prop-row>
<prop-row tone="s" indent="87">宽度<span slot="v">400</span></prop-row>
<prop-row indent="87">高度<span slot="v">300</span></prop-row>
<prop-row tone="s" arrow="right">sizePolicy<span slot="v">[Preferred, Preferred, 0, 0]</span></prop-row>
<prop-row arrow="right">minimumSize<span slot="v">0 x 0</span></prop-row>
</prop-editor>
</div>
</div>
<status-strip>
<status-item n="1"><i>问题</i></status-item><status-item n="2">Search Results</status-item><status-item n="3"><i>应用程序输出</i></status-item><status-item n="4"><i>编译输出</i></status-item><status-item n="5">Debugger Console</status-item><status-item n="6"><i>概要信息</i></status-item><status-item n="8">Test Results</status-item>
</status-strip>
</div></div>`);
</script>
</body></html>
